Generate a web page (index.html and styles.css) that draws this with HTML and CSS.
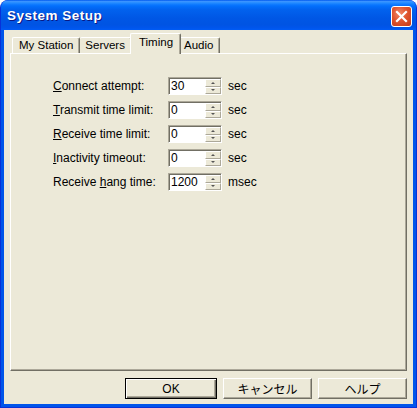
FILE: index.html
```html
<!DOCTYPE html>
<html>
<head>
<meta charset="utf-8">
<link rel="stylesheet" href="styles.css">
</head>
<body>
<div class="window">
  <div class="titlebar">
    <span class="title">System Setup</span>
    <span class="close">
      <svg width="13" height="13" viewBox="0 0 13 13"><path d="M2 2 L11 11 M11 2 L2 11" stroke="#fff" stroke-width="2.2" stroke-linecap="square"/></svg>
    </span>
  </div>
  <div class="client">
    <div class="tabs">
      <div class="tab">My Station</div>
      <div class="tab">Servers</div>
      <div class="tab active">Timing</div>
      <div class="tab">Audio</div>
    </div>
    <div class="panel">
      <div class="form">
        <div class="label"><u>C</u>onnect attempt:</div>
        <div class="spin"><div class="field">30</div><div class="arrows"><div class="ab"><i class="up"></i></div><div class="ab"><i class="dn"></i></div></div></div>
        <div class="unit">sec</div>

        <div class="label"><u>T</u>ransmit time limit:</div>
        <div class="spin"><div class="field">0</div><div class="arrows"><div class="ab"><i class="up"></i></div><div class="ab"><i class="dn"></i></div></div></div>
        <div class="unit">sec</div>

        <div class="label"><u>R</u>eceive time limit:</div>
        <div class="spin"><div class="field">0</div><div class="arrows"><div class="ab"><i class="up"></i></div><div class="ab"><i class="dn"></i></div></div></div>
        <div class="unit">sec</div>

        <div class="label"><u>I</u>nactivity timeout:</div>
        <div class="spin"><div class="field">0</div><div class="arrows"><div class="ab"><i class="up"></i></div><div class="ab"><i class="dn"></i></div></div></div>
        <div class="unit">sec</div>

        <div class="label">Receive <u>h</u>ang time:</div>
        <div class="spin"><div class="field">1200</div><div class="arrows"><div class="ab"><i class="up"></i></div><div class="ab"><i class="dn"></i></div></div></div>
        <div class="unit">msec</div>
      </div>
    </div>
    <div class="buttons">
      <div class="btn default">OK</div>
      <div class="btn">キャンセル</div>
      <div class="btn">ヘルプ</div>
    </div>
  </div>
</div>
</body>
</html>
```
FILE: styles.css
```css
html, body {
  margin: 0;
  padding: 0;
  background: #ffffff;
}
.window {
  width: 417px;
  height: 408px;
  box-sizing: border-box;
  background: #0055EA;
  border: 1px solid #0831D9;
  border-top: none;
  border-radius: 8px 8px 0 0;
  padding: 0 3px 3px 3px;
  display: flex;
  flex-direction: column;
  overflow: hidden;
}
.titlebar {
  height: 30px;
  margin: 0 -4px;
  padding: 0 5px 0 7px;
  display: flex;
  align-items: center;
  justify-content: space-between;
  border-radius: 8px 8px 0 0;
  background: linear-gradient(to bottom, #0058EE 0%, #3A93FF 5%, #288EFF 9%, #127DFF 14%, #036FFC 20%, #0262EE 32%, #0057E5 60%, #0054E3 82%, #0055EB 92%, #005BF5 100%);
}
.title {
  font-family: "Liberation Sans", Arial, sans-serif;
  font-weight: bold;
  font-size: 13.5px;
  letter-spacing: 0.5px;
  color: #ffffff;
  text-shadow: 1px 1px 0 #0A1883;
  margin-top: 1px;
}
.close {
  width: 21px;
  height: 21px;
  box-sizing: border-box;
  border: 1px solid #ffffff;
  border-radius: 3px;
  background: radial-gradient(circle at 40% 35%, #F08A6A 0%, #E0552F 45%, #C43A18 100%);
  display: flex;
  align-items: center;
  justify-content: center;
  margin-top: 2px;
}
.close svg { display: block; }
.client {
  flex: 1;
  background: #ECE9D8;
  padding: 3px 5px 0 6px;
  display: flex;
  flex-direction: column;
  font-family: "Liberation Sans", Arial, sans-serif;
  font-size: 11.5px;
  color: #000;
}
.tabs {
  display: flex;
  align-items: flex-end;
  height: 20px;
  padding-left: 2px;
}
.tab {
  height: 16px;
  box-sizing: border-box;
  padding: 0 6px 0 6px;
  line-height: 15px;
  border-top: 1px solid #ffffff;
  border-left: 1px solid #ffffff;
  border-right: 1px solid #716F64;
  box-shadow: inset -1px 0 0 #ACA899;
  border-radius: 2px 2px 0 0;
  background: #ECE9D8;
}
.tab + .tab { border-left: none; padding-left: 5px; }
.tab.active {
  height: 21px;
  margin: 0 -2px -1px -2px;
  padding: 0 7px 0 8px;
  line-height: 17px;
  border-left: 1px solid #ffffff;
  position: relative;
  z-index: 1;
}
.panel {
  height: 318px;
  box-sizing: border-box;
  margin-right: 1px;
  border-top: 1px solid #ffffff;
  border-left: 1px solid #ffffff;
  border-right: 1px solid #716F64;
  border-bottom: 1px solid #716F64;
  box-shadow: inset -1px -1px 0 #ACA899;
  padding: 23px 0 0 42px;
}
.form {
  display: grid;
  grid-template-columns: 109px 54px auto;
  grid-auto-rows: 18px;
  row-gap: 6px;
  column-gap: 6px;
  align-items: center;
}
.label {
  font-size: 12px;
  line-height: 18px;
  white-space: nowrap;
}
.label u { text-decoration-thickness: 1px; text-underline-offset: 1px; }
.unit { font-size: 12px; line-height: 18px; }
.spin {
  height: 18px;
  box-sizing: border-box;
  display: flex;
  border-top: 1px solid #ACA899;
  border-left: 1px solid #ACA899;
  border-right: 1px solid #ffffff;
  border-bottom: 1px solid #ffffff;
  box-shadow: inset 1px 1px 0 #716F64;
  padding: 1px 0 0 1px;
}
.field {
  flex: 1;
  background: #ffffff;
  font-size: 12px;
  line-height: 15px;
  padding-left: 1px;
}
.arrows {
  width: 16px;
  display: flex;
  flex-direction: column;
}
.ab {
  flex: 1;
  box-sizing: border-box;
  background: #ECE9D8;
  border-top: 1px solid #ffffff;
  border-left: 1px solid #ffffff;
  border-right: 1px solid #ACA899;
  border-bottom: 1px solid #ACA899;
  display: flex;
  align-items: center;
  justify-content: center;
}
.ab i {
  display: block;
  width: 0;
  height: 0;
  border-left: 2px solid transparent;
  border-right: 2px solid transparent;
}
.ab i.up { border-bottom: 2px solid #555; }
.ab i.dn { border-top: 2px solid #555; }
.buttons {
  display: flex;
  justify-content: flex-end;
  gap: 6px;
  margin-top: 7px;
  padding-right: 1px;
}
.btn {
  width: 89px;
  height: 21px;
  box-sizing: border-box;
  border-top: 1px solid #ffffff;
  border-left: 1px solid #ffffff;
  border-right: 1px solid #716F64;
  border-bottom: 1px solid #716F64;
  box-shadow: inset -1px -1px 0 #ACA899;
  display: flex;
  align-items: center;
  justify-content: center;
  font-family: "Liberation Sans", "Noto Sans CJK JP", sans-serif;
  font-size: 12px;
}
.btn.default {
  width: 92px;
  border: 1px solid #000000;
  box-shadow: inset 1px 1px 0 #ffffff, inset -1px -1px 0 #716F64, inset -2px -2px 0 #ACA899;
}
```
